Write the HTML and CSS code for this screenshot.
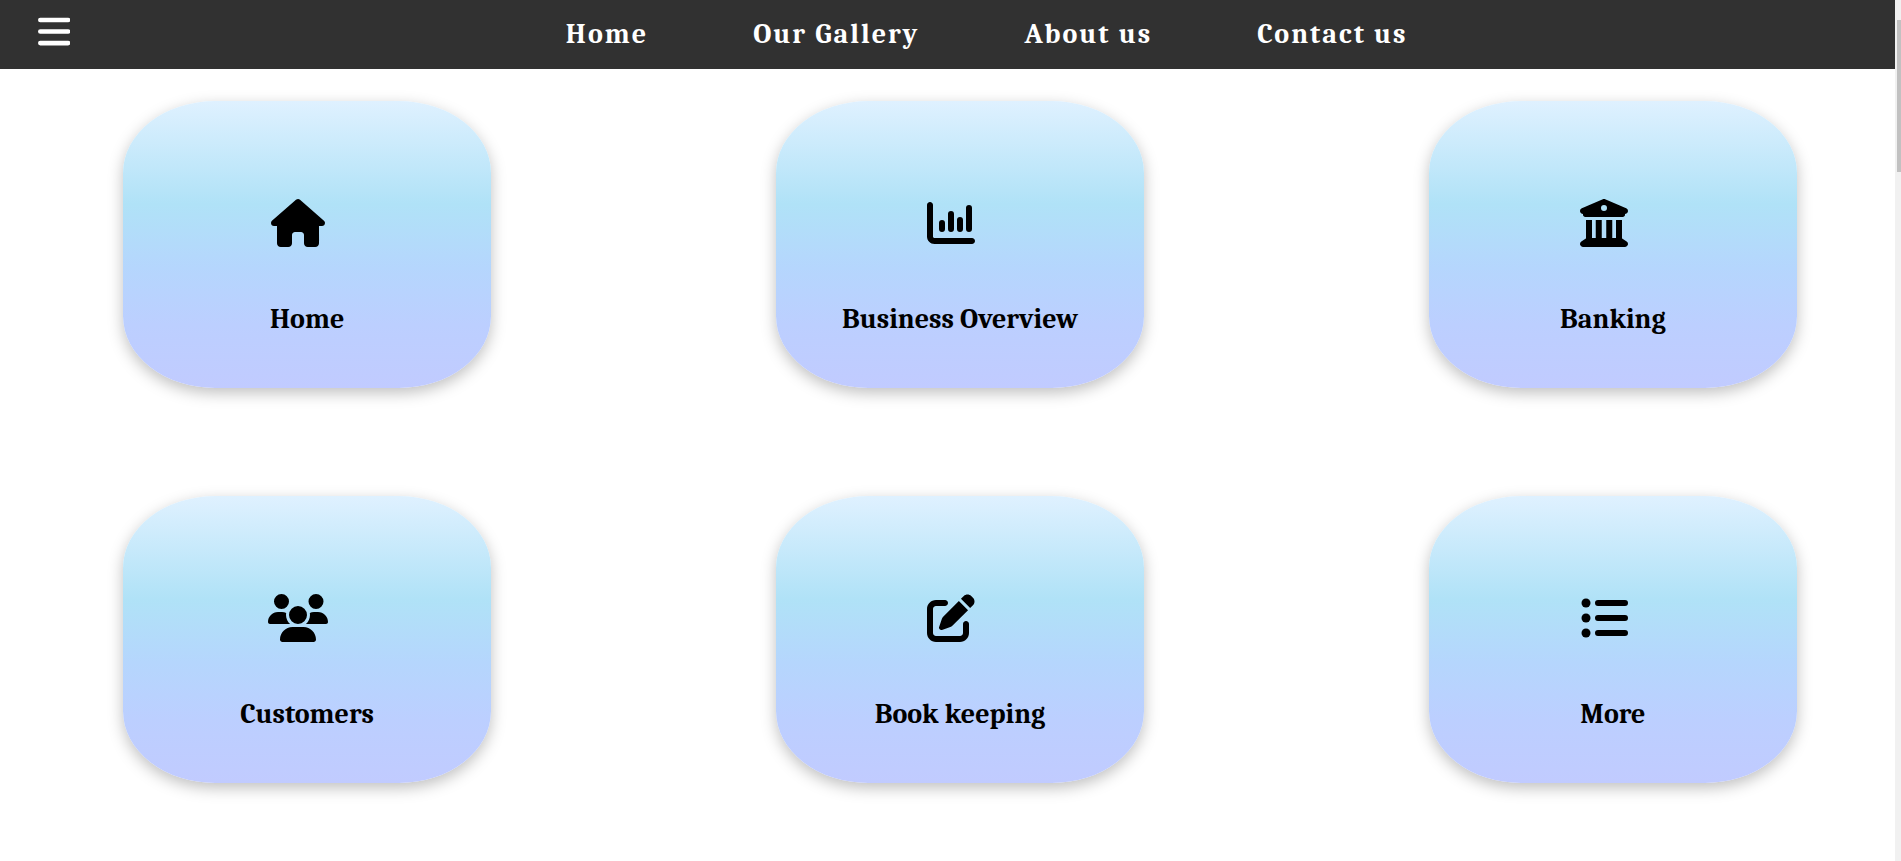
FILE: index.html
```html
<!DOCTYPE html>
<html lang="en">
<head>
<meta charset="utf-8">
<meta name="viewport" content="width=device-width, initial-scale=1">
<title>Home</title>
<link rel="stylesheet" href="styles.css">
</head>
<body>
<div class="page">
  <header class="topbar">
    <button class="menu-button" type="button" aria-label="Open menu">
      <svg class="menu-icon" viewBox="0 0 448 512" aria-hidden="true"><path d="M32 96H416M32 256H416M32 416H416"/></svg>
    </button>
    <nav class="nav">
      <a class="nav-link" href="#home">Home</a>
      <a class="nav-link" href="#gallery">Our Gallery</a>
      <a class="nav-link" href="#about">About us</a>
      <a class="nav-link" href="#contact">Contact us</a>
    </nav>
  </header>
  <main class="cards">
    <a class="card" href="#home">
      <svg class="card-icon" viewBox="0 0 576 512" aria-hidden="true"><path d="M575.8 255.5c0 18-15 32.1-32 32.1h-32l.7 160.2c0 2.7-.2 5.4-.5 8.1V472c0 22.1-17.9 40-40 40H456c-1.100 0-2.200 0-3.300-.1c-1.400 .1-2.800 .1-4.200 .1H416 392c-22.100 0-40-17.900-40-40V448 384c0-17.700-14.300-32-32-32H256c-17.700 0-32 14.300-32 32v64 24c0 22.100-17.900 40-40 40H160 128.100c-1.500 0-3-.1-4.500-.2c-1.200 .1-2.400 .2-3.600 .2H104c-22.100 0-40-17.900-40-40V360c0-.9 0-1.900 .1-2.800V287.600H32c-18 0-32-14-32-32.100c0-9 3-17 10-24L266.400 8c7-7 15-8 22-8s15 2 21 7L564.800 231.500c8 7 12 15 11 24z"/></svg>
      <span class="card-label">Home</span>
    </a>
    <a class="card" href="#overview">
      <svg class="card-icon" viewBox="0 0 512 512" aria-hidden="true"><path d="M32 32c17.700 0 32 14.300 32 32V400c0 8.800 7.200 16 16 16H480c17.700 0 32 14.300 32 32s-14.300 32-32 32H80c-44.200 0-80-35.800-80-80V64C0 46.300 14.300 32 32 32z"/><path class="stroke" d="M160 256V320M256 160V320M352 224V320M448 96V320"/></svg>
      <span class="card-label">Business Overview</span>
    </a>
    <a class="card" href="#banking">
      <svg class="card-icon" viewBox="0 0 512 512" aria-hidden="true"><path d="M243.400 2.600l-224 96c-14 6-21.800 21-18.700 35.800S16.800 160 32 160v8c0 13.300 10.700 24 24 24H456c13.300 0 24-10.700 24-24v-8c15.200 0 28.300-10.700 31.300-25.600s-4.800-29.900-18.700-35.800l-224-96c-8-3.400-17.200-3.400-25.200 0zM128 224H64V420.300c-.6 .3-1.200 .7-1.800 1.100l-48 32c-11.700 7.800-17 22.400-12.900 35.900S17.900 512 32 512H480c14.100 0 26.500-9.200 30.600-22.700s-1.100-28.100-12.900-35.900l-48-32c-.6-.4-1.200-.7-1.800-1.100V224H384V416H344V224H280V416H232V224H168V416H128V224zM256 64a32 32 0 1 1 0 64 32 32 0 1 1 0-64z"/></svg>
      <span class="card-label">Banking</span>
    </a>
    <a class="card" href="#customers">
      <svg class="card-icon" viewBox="0 0 640 512" aria-hidden="true"><path d="M144 0a80 80 0 1 1 0 160A80 80 0 1 1 144 0zM512 0a80 80 0 1 1 0 160A80 80 0 1 1 512 0zM0 298.700C0 239.800 47.800 192 106.700 192h42.700c15.900 0 31 3.500 44.600 9.700c-1.300 7.200-1.900 14.700-1.900 22.300c0 38.200 16.800 72.500 43.300 96c-.2 0-.4 0-.7 0H21.300C9.600 320 0 310.400 0 298.700zM405.300 320c-.2 0-.4 0-.7 0c26.600-23.500 43.300-57.800 43.300-96c0-7.600-.7-15-1.900-22.300c13.600-6.300 28.700-9.700 44.600-9.700h42.700C592.200 192 640 239.800 640 298.700c0 11.800-9.600 21.300-21.300 21.300H405.300zM224 224a96 96 0 1 1 192 0 96 96 0 1 1 -192 0zM128 485.300C128 411.700 187.700 352 261.300 352H378.700C452.300 352 512 411.700 512 485.300c0 14.700-11.900 26.700-26.700 26.700H154.700c-14.700 0-26.700-11.900-26.700-26.700z"/></svg>
      <span class="card-label">Customers</span>
    </a>
    <a class="card" href="#bookkeeping">
      <svg class="card-icon" viewBox="0 0 512 512" aria-hidden="true"><path d="M471.600 21.700c-21.900-21.900-57.300-21.900-79.200 0L362.300 51.700l97.900 97.900 30.100-30.100c21.900-21.900 21.900-57.300 0-79.200L471.600 21.700zm-299.200 220c-6.100 6.100-10.800 13.600-13.500 21.900l-29.600 88.800c-2.900 8.600-.6 18.100 5.800 24.600s15.900 8.700 24.600 5.800l88.800-29.600c8.200-2.700 15.700-7.400 21.900-13.500L437.700 172.300 339.700 74.300 172.400 241.700zM96 64C43 64 0 107 0 160V416c0 53 43 96 96 96H352c53 0 96-43 96-96V320c0-17.700-14.300-32-32-32s-32 14.300-32 32v96c0 17.700-14.300 32-32 32H96c-17.700 0-32-14.300-32-32V160c0-17.700 14.300-32 32-32h96c17.700 0 32-14.300 32-32s-14.300-32-32-32H96z"/></svg>
      <span class="card-label">Book keeping</span>
    </a>
    <a class="card" href="#more">
      <svg class="card-icon" viewBox="0 0 512 512" aria-hidden="true"><circle cx="64" cy="96" r="48"/><circle cx="64" cy="256" r="48"/><circle cx="64" cy="416" r="48"/><path class="stroke" d="M192 96H480M192 256H480M192 416H480"/></svg>
      <span class="card-label">More</span>
    </a>
  </main>
</div>
<div class="scroll-track" aria-hidden="true"><div class="scroll-thumb"></div></div>
</body>
</html>
```
FILE: styles.css
```css
* {
  box-sizing: border-box;
}

body {
  display: grid;
  grid-template-columns: minmax(0, 1fr) 6px;
  min-height: 100vh;
  margin: 0;
  background: #fff;
  font-family: Cambria, Caladea, "Liberation Serif", serif;
  font-weight: 700;
}

.topbar {
  display: flex;
  align-items: flex-start;
  padding: 12px 0 12px 38px;
  background: #313131;
}

.menu-button {
  display: flex;
  padding: 1px 0 0;
  border: 0;
  background: none;
  cursor: pointer;
}

.menu-icon {
  height: 37px;
  fill: none;
  stroke: #fff;
  stroke-width: 64;
  stroke-linecap: round;
}

.nav {
  display: flex;
  flex: 1;
  justify-content: center;
  gap: 105px;
  padding-left: 8px;
}

.nav-link {
  color: #fff;
  font-size: 28px;
  line-height: 45px;
  letter-spacing: 2px;
  text-decoration: none;
}

.cards {
  display: grid;
  grid-template-columns: repeat(3, 22%);
  justify-content: space-between;
  gap: 108px 0;
  padding: 32px 98px 76px 123px;
}

.card {
  display: flex;
  flex-direction: column;
  align-items: center;
  gap: 56px;
  padding: 98px 16px 53px;
  border-radius: 25%;
  background: linear-gradient(#dff1ff, #b0e2f7 36%, #b5d6fd 58%, #bccfff 78%, #c1cbff);
  box-shadow: 0 5px 15px rgba(0, 0, 0, 0.25);
  color: #000;
  text-decoration: none;
}

.card-icon {
  height: 48px;
  margin-right: 18px;
}

.stroke {
  fill: none;
  stroke: #000;
  stroke-width: 64;
  stroke-linecap: round;
}

.card-label {
  font-size: 28px;
  line-height: 32px;
}

.scroll-track {
  padding: 20px 0 0 2px;
  background: #f1f1f1;
}

.scroll-thumb {
  height: 152px;
  background: #c1c1c1;
}
```
